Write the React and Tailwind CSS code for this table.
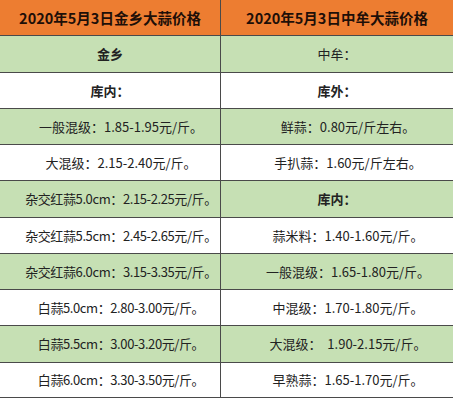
import React from 'react';

const rows = [
    { h: 'h-[37px]', bg: 'bg-[#c6e0b4]', left: '金乡', right: '中牟：', lb: true, rb: false, label: true },
    { h: 'h-[36px]', bg: 'bg-white', left: '库内：', right: '库外：', lb: true, rb: true, label: true },
    { h: 'h-[36px]', bg: 'bg-[#c6e0b4]', left: '一般混级：1.85-1.95元/斤。', right: '鲜蒜：0.80元/斤左右。' },
    { h: 'h-[36px]', bg: 'bg-white', left: '大混级：2.15-2.40元/斤。', right: '手扒蒜：1.60元/斤左右。' },
    { h: 'h-[37px]', bg: 'bg-[#c6e0b4]', left: '杂交红蒜5.0cm：2.15-2.25元/斤。', right: '库内：', rb: true, rightLabel: true, tight: true },
    { h: 'h-[36px]', bg: 'bg-white', left: '杂交红蒜5.5cm：2.45-2.65元/斤。', right: '蒜米料：1.40-1.60元/斤。', tight: true },
    { h: 'h-[36px]', bg: 'bg-[#c6e0b4]', left: '杂交红蒜6.0cm：3.15-3.35元/斤。', right: '一般混级：1.65-1.80元/斤。', tight: true },
    { h: 'h-[36px]', bg: 'bg-white', left: '白蒜5.0cm：2.80-3.00元/斤。', right: '中混级：1.70-1.80元/斤。', tight: true },
    { h: 'h-[37px]', bg: 'bg-[#c6e0b4]', left: '白蒜5.5cm：3.00-3.20元/斤。', right: '大混级：  1.90-2.15元/斤。', tight: true },
    { h: 'h-[35px]', bg: 'bg-white', left: '白蒜6.0cm：3.30-3.50元/斤。', right: '早熟蒜：1.65-1.70元/斤。', tight: true },
];

const Cell = ({ text, bold, label, tight, className }) => (
    <div
        className={`flex items-center justify-center whitespace-pre text-[13px] text-[#222] ${label ? '' : 'pl-[22px]'} ${bold ? 'font-bold' : ''} ${tight ? 'tracking-[-0.4px]' : ''} ${className || ''}`}
    >
        {text}
    </div>
);

const App = () => {
    return (
        <div className="w-[453px] h-[400px] bg-white overflow-hidden font-['Noto_Sans_CJK_SC',sans-serif]">
            <div className="flex h-[36px] bg-[#ed7d31] border-b border-[#4a4a4a]">
                <div className="w-[221px] border-r border-[#4a4a4a] flex items-center justify-center text-[14.5px] font-bold text-[#1e0f08]">
                    2020年5月3日金乡大蒜价格
                </div>
                <div className="flex-1 flex items-center justify-center text-[14.5px] font-bold text-[#1e0f08]">
                    2020年5月3日中牟大蒜价格
                </div>
            </div>
            {rows.map((r, i) => (
                <div key={i} className={`flex ${r.h} ${r.bg} border-b border-[#4a4a4a]`}>
                    <Cell text={r.left} bold={r.lb} label={r.label} tight={r.tight} className="w-[221px] border-r border-[#4a4a4a]" />
                    <Cell text={r.right} bold={r.rb} label={r.label || r.rightLabel} className="flex-1" />
                </div>
            ))}
        </div>
    );
};

export default App;
